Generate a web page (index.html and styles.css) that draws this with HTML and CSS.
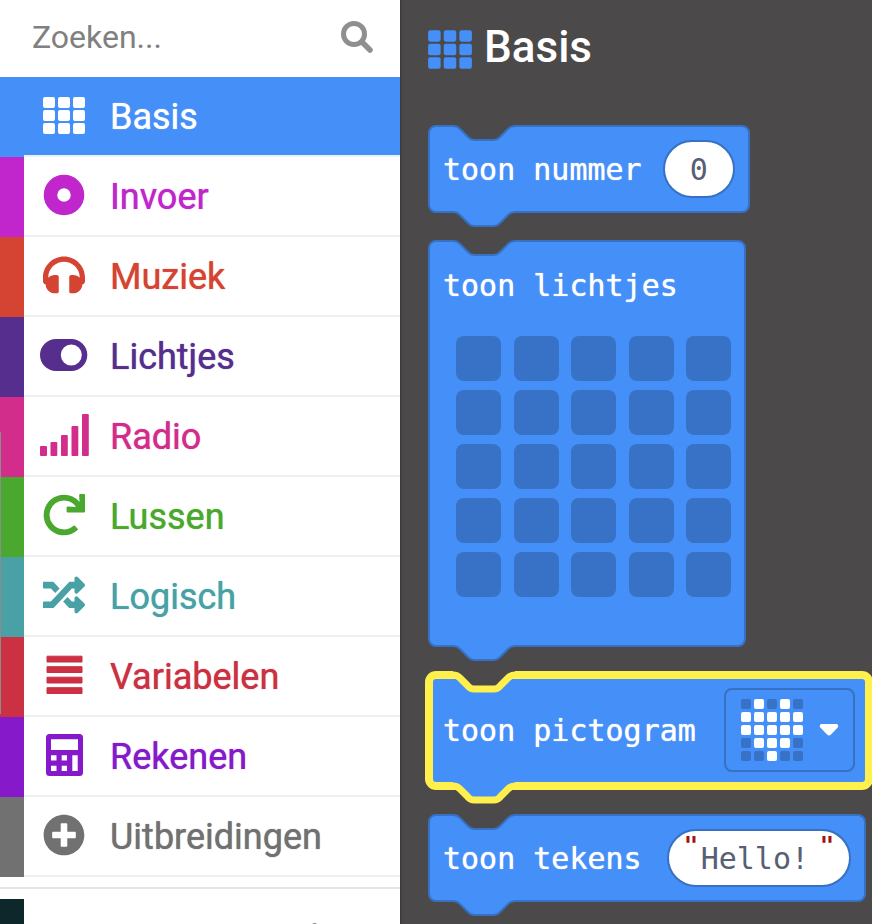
FILE: index.html
```html
<!DOCTYPE html>
<html lang="nl">
<head>
<meta charset="utf-8">
<title>Basis</title>
<link rel="stylesheet" href="styles.css">
</head>
<body>
<svg class="defs" aria-hidden="true">
  <symbol id="grid-icon" viewBox="0 0 48 44">
    <g id="grid-row"><rect x="3" y="3" width="12" height="11" rx="2"/><rect x="18" y="3" width="12" height="11" rx="2"/><rect x="33" y="3" width="12" height="11" rx="2"/></g>
    <use href="#grid-row" y="13"/><use href="#grid-row" y="26"/>
  </symbol>
  <symbol id="notch" viewBox="0 0 70 26">
    <path class="notch-fill" d="M2 0V6C7 6 8 8 10 10L16 16C18 18 19 20 23 20H43C47 20 48 18 50 16L56 10C58 8 59 6 64 6V0Z"/>
    <path class="notch-line" d="M0 6H2C7 6 8 8 10 10L16 16C18 18 19 20 23 20H43C47 20 48 18 50 16L56 10C58 8 59 6 64 6H66"/>
  </symbol>
</svg>
<div class="editor">
  <nav class="toolbox">
    <form class="search">
      <input class="search-input" type="search" placeholder="Zoeken..." aria-label="Zoeken">
      <button class="search-button" type="button" aria-label="Zoeken">
        <svg width="32" height="32" viewBox="0 0 32 32"><circle cx="13" cy="13" r="10.5" fill="none" stroke="currentColor" stroke-width="5"/><path d="M21 21L29 29" stroke="currentColor" stroke-width="5.5" stroke-linecap="round"/></svg>
      </button>
    </form>
    <ul class="categories">
      <li><button class="category basis selected"><span class="tab"></span><span class="row"><svg class="icon"><use href="#grid-icon"/></svg>Basis</span></button></li>
      <li><button class="category invoer"><span class="tab"></span><span class="row"><svg class="icon" viewBox="0 0 48 44"><circle cx="24" cy="21" r="13.5" fill="none" stroke="currentColor" stroke-width="13.5"/></svg>Invoer</span></button></li>
      <li><button class="category muziek"><span class="tab"></span><span class="row"><svg class="icon" viewBox="0 0 48 44"><path transform="translate(3 0) scale(.082)" d="M256 32C114.52 32 0 146.497 0 288v48a32 32 0 0 0 17.689 28.622l14.383 7.191C34.083 431.903 83.421 480 144 480h24c13.255 0 24-10.745 24-24V280c0-13.255-10.745-24-24-24h-24c-31.342 0-59.671 12.879-80 33.627V288c0-105.869 86.131-192 192-192s192 86.131 192 192v1.627C427.671 268.879 399.342 256 368 256h-24c-13.255 0-24 10.745-24 24v176c0 13.255 10.745 24 24 24h24c60.579 0 109.917-48.098 111.928-108.187l14.382-7.191A32 32 0 0 0 512 336v-48c0-141.479-114.496-256-256-256z"/></svg>Muziek</span></button></li>
      <li><button class="category lichtjes"><span class="tab"></span><span class="row"><svg class="icon" viewBox="0 0 48 44"><path fill-rule="evenodd" d="M16 5H31.300a16 16 0 0 1 0 32H16a16 16 0 0 1 0-32ZM31.300 10.500a10.500 10.500 0 1 0 0 21a10.500 10.500 0 0 0 0-21Z"/></svg>Lichtjes</span></button></li>
      <li><button class="category radio"><span class="tab"></span><span class="row"><svg class="icon" viewBox="0 0 48 44"><rect y="32" width="7" height="10" rx="1"/><rect x="10.500" y="28" width="6.800" height="14" rx="1"/><rect x="21" y="21" width="6.800" height="21" rx="1"/><rect x="31.500" y="12" width="6.800" height="30" rx="1"/><rect x="42" y="0" width="6.800" height="42" rx="1"/></svg>Radio</span></button></li>
      <li><button class="category lussen"><span class="tab"></span><span class="row"><svg class="icon" viewBox="0 0 48 44"><path transform="translate(3 0) scale(.082)" d="M500.33 0h-47.41a12 12 0 0 0-12 12.57l4 82.76A247.42 247.42 0 0 0 256 8C119.34 8 7.900 119.530 8 256.190 8.100 393.070 119.100 504 256 504a247.100 247.100 0 0 0 166.180-63.910 12 12 0 0 0 .480-17.430l-34-34a12 12 0 0 0-16.380-.550A176 176 0 1 1 402.100 157.800l-101.530-4.870a12 12 0 0 0-12.570 12v47.410a12 12 0 0 0 12 12h200.330a12 12 0 0 0 12-12V12a12 12 0 0 0-12-12z"/></svg>Lussen</span></button></li>
      <li><button class="category logisch"><span class="tab"></span><span class="row"><svg class="icon" viewBox="0 0 48 44"><path transform="translate(3 0) scale(.082)" d="M504.971 359.029c9.373 9.373 9.373 24.569 0 33.941l-80 79.984c-15.010 15.010-40.971 4.490-40.971-16.971V416h-58.785a12.004 12.004 0 0 1-8.773-3.812l-70.556-75.596 53.333-57.143L352 336h32v-39.981c0-21.438 25.943-31.998 40.971-16.971l80 79.981zM12 176h84l52.781 56.551 53.333-57.143-70.556-75.596A11.999 11.999 0 0 0 122.785 96H12c-6.627 0-12 5.373-12 12v56c0 6.627 5.373 12 12 12zm372 0v39.984c0 21.460 25.961 31.980 40.971 16.971l80-79.984c9.373-9.373 9.373-24.569 0-33.941l-80-79.981C409.943 24.021 384 34.582 384 56.019V96h-58.785a12.004 12.004 0 0 0-8.773 3.812L96 336H12c-6.627 0-12 5.373-12 12v56c0 6.627 5.373 12 12 12h110.785c3.326 0 6.503-1.381 8.773-3.812L352 176h32z"/></svg>Logisch</span></button></li>
      <li><button class="category variabelen"><span class="tab"></span><span class="row"><svg class="icon" viewBox="0 0 48 44"><path d="M7 2.200H42V8H7ZM7 12.700H42V18.500H7ZM7 23.200H42V29H7ZM7 33.700H42V39.500H7Z" stroke="currentColor" stroke-width="1" stroke-linejoin="round"/></svg>Variabelen</span></button></li>
      <li><button class="category rekenen"><span class="tab"></span><span class="row"><svg class="icon" viewBox="0 0 48 44"><path fill-rule="evenodd" d="M9.500 0H39.500a3.500 3.500 0 0 1 3.500 3.500V38.500a3.500 3.500 0 0 1-3.500 3.500H9.500a3.500 3.500 0 0 1-3.500-3.500V3.500a3.500 3.500 0 0 1 3.500-3.500ZM11 5.300V16H38V5.300ZM11 21.200V26.500H16.500V21.200ZM21.700 21.200V26.500H27V21.200ZM32.300 21.200V37H37.700V21.200ZM11 31.700V37H16.500V31.700ZM21.700 31.700V37H27V31.700Z"/></svg>Rekenen</span></button></li>
      <li><button class="category uitbreidingen"><span class="tab"></span><span class="row"><svg class="icon" viewBox="0 0 48 44"><path transform="translate(3 0) scale(.082)" d="M256 8C119 8 8 119 8 256s111 248 248 248 248-111 248-248S393 8 256 8zm144 276c0 6.600-5.400 12-12 12h-92v92c0 6.600-5.400 12-12 12h-56c-6.600 0-12-5.400-12-12v-92h-92c-6.600 0-12-5.400-12-12v-56c0-6.600 5.400-12 12-12h92v-92c0-6.600 5.400-12 12-12h56c6.600 0 12 5.400 12 12v92h92c6.600 0 12 5.400 12 12v56z"/></svg>Uitbreidingen</span></button></li>
    </ul>
    <hr class="divider">
    <button class="category geavanceerd"><span class="tab"></span><span class="row"><svg class="icon" viewBox="0 0 48 44"></svg>Geavanceerd</span></button>
    <div class="scroll-thumb"></div>
  </nav>

  <main class="flyout">
    <h1 class="flyout-title"><svg class="title-icon"><use href="#grid-icon"/></svg>Basis</h1>
    <div class="blocks">
      <div class="block">
        <svg class="notch"><use href="#notch"/></svg>
        <label class="block-label" for="number">toon nummer</label>
        <input class="pill number" id="number" type="text" value="0">
        <svg class="notch bottom"><use href="#notch"/></svg>
      </div>

      <div class="block leds">
        <svg class="notch"><use href="#notch"/></svg>
        <span class="block-label">toon lichtjes</span>
        <div class="led-grid">
          <button aria-label="Led 1"></button><button aria-label="Led 2"></button><button aria-label="Led 3"></button><button aria-label="Led 4"></button><button aria-label="Led 5"></button>
          <button aria-label="Led 6"></button><button aria-label="Led 7"></button><button aria-label="Led 8"></button><button aria-label="Led 9"></button><button aria-label="Led 10"></button>
          <button aria-label="Led 11"></button><button aria-label="Led 12"></button><button aria-label="Led 13"></button><button aria-label="Led 14"></button><button aria-label="Led 15"></button>
          <button aria-label="Led 16"></button><button aria-label="Led 17"></button><button aria-label="Led 18"></button><button aria-label="Led 19"></button><button aria-label="Led 20"></button>
          <button aria-label="Led 21"></button><button aria-label="Led 22"></button><button aria-label="Led 23"></button><button aria-label="Led 24"></button><button aria-label="Led 25"></button>
        </div>
        <svg class="notch bottom"><use href="#notch"/></svg>
      </div>

      <div class="block highlighted">
        <svg class="notch"><use href="#notch"/></svg>
        <span class="block-label">toon pictogram</span>
        <button class="picker" aria-label="Pictogram kiezen">
          <svg width="62" height="62" viewBox="0 0 62 62">
            <g fill="#3872c6"><rect width="10" height="10" rx="2"/><rect x="26" width="10" height="10" rx="2"/><rect x="52" width="10" height="10" rx="2"/><rect y="39" width="10" height="10" rx="2"/><rect x="52" y="39" width="10" height="10" rx="2"/><rect y="52" width="10" height="10" rx="2"/><rect x="13" y="52" width="10" height="10" rx="2"/><rect x="39" y="52" width="10" height="10" rx="2"/><rect x="52" y="52" width="10" height="10" rx="2"/></g>
            <g fill="#fff"><rect x="13" width="10" height="10" rx="2"/><rect x="39" width="10" height="10" rx="2"/><rect y="13" width="10" height="10" rx="2"/><rect x="13" y="13" width="10" height="10" rx="2"/><rect x="26" y="13" width="10" height="10" rx="2"/><rect x="39" y="13" width="10" height="10" rx="2"/><rect x="52" y="13" width="10" height="10" rx="2"/><rect y="26" width="10" height="10" rx="2"/><rect x="13" y="26" width="10" height="10" rx="2"/><rect x="26" y="26" width="10" height="10" rx="2"/><rect x="39" y="26" width="10" height="10" rx="2"/><rect x="52" y="26" width="10" height="10" rx="2"/><rect x="13" y="39" width="10" height="10" rx="2"/><rect x="26" y="39" width="10" height="10" rx="2"/><rect x="39" y="39" width="10" height="10" rx="2"/><rect x="26" y="52" width="10" height="10" rx="2"/></g>
          </svg>
          <svg width="20" height="14" viewBox="0 0 20 14"><path d="M3 1H17C19 1 20 3 18.500 4.700L12 11.500Q10 13.500 8 11.500L1.500 4.700C0 3 1 1 3 1Z" fill="#fff"/></svg>
        </button>
        <svg class="notch bottom"><use href="#notch"/></svg>
      </div>

      <div class="block wide">
        <svg class="notch"><use href="#notch"/></svg>
        <label class="block-label" for="text">toon tekens</label>
        <span class="pill text"><span class="quote">"</span><input id="text" type="text" value="Hello!"><span class="quote">"</span></span>
        <svg class="notch bottom"><use href="#notch"/></svg>
      </div>
    </div>
  </main>
</div>
</body>
</html>
```
FILE: styles.css
```css
* { box-sizing: border-box; }

body {
  margin: 0;
  overflow: hidden;
  font-family: Roboto, "Liberation Sans", sans-serif;
  background: #4b4949;
}

button, input {
  margin: 0;
  padding: 0;
  border: 0;
  background: none;
  font: inherit;
  color: inherit;
}

.defs { position: absolute; width: 0; height: 0; }

.editor { display: flex; height: 100vh; }

/* Toolbox */
.toolbox {
  position: relative;
  flex: 0 0 400px;
  overflow: hidden;
  background: #fff;
}

.search {
  display: flex;
  align-items: center;
  height: 77px;
  padding: 0 27px 4px 32px;
  color: #8f8f8f;
}

.search-input {
  flex: 1;
  min-width: 0;
  outline: 0;
  font-size: 32px;
  line-height: 40px;
  appearance: none;
}

.search-input::placeholder { color: #808080; opacity: 1; }

.search-button { display: flex; }

.categories { margin: 0; padding: 0; list-style: none; }

.category {
  display: flex;
  width: 100%;
  height: 80px;
  font-size: 36px;
  text-align: left;
  text-shadow: 0 0 1px currentColor;
  color: var(--hue);
}

.tab { flex: 0 0 24px; height: 80px; background: var(--hue); }

.row {
  display: flex;
  flex: 1;
  align-items: center;
  gap: 22px;
  height: 80px;
  padding: 2px 0 0 16px;
  border-bottom: 2px solid #ebf0f0;
}

.icon {
  flex: none;
  width: 48px;
  height: 44px;
  margin-bottom: 2px;
  overflow: visible;
  fill: currentColor;
}

.selected .row { background: var(--hue); background-clip: padding-box; color: #fff; }

.basis { --hue: #458ff8; }
.invoer { --hue: #c026cc; }
.muziek { --hue: #d54332; }
.lichtjes { --hue: #562e8d; }
.radio { --hue: #d22d8a; }
.lussen { --hue: #4ba82f; }
.logisch { --hue: #49a1a6; }
.variabelen { --hue: #cb3142; }
.rekenen { --hue: #861acb; }
.uitbreidingen { --hue: #717171; }
.geavanceerd { --hue: #0d272b; text-shadow: none; }
.geavanceerd .row { color: #717171; }

.divider {
  height: 2px;
  margin: 10px 0;
  border: 0;
  background: #e5e5e5;
}

.scroll-thumb {
  position: absolute;
  top: 432px;
  left: 0;
  width: 1px;
  height: 282px;
  background: #8c8c8c;
}

/* Flyout */
.flyout {
  flex: 1;
  min-width: 0;
  padding: 16px 0 0 28px;
  box-shadow: inset 3px 0 3px -3px #222;
}

.flyout-title {
  display: flex;
  align-items: center;
  gap: 9px;
  margin: 0 0 47px -3px;
  font-size: 44px;
  font-weight: 500;
  line-height: 62px;
  color: #fff;
}

.title-icon {
  width: 50px;
  height: 46px;
  margin-top: 6px;
  fill: #458ff8;
}

.blocks {
  display: flex;
  flex-direction: column;
  align-items: flex-start;
  gap: 27px;
}

.block {
  --line: #3671c3;
  --line-width: 2px;
  position: relative;
  display: flex;
  align-items: center;
  gap: 21px;
  padding: 13px;
  border: 2px solid var(--line);
  border-radius: 8px;
  background: #458ff8;
  font-family: "DejaVu Sans Mono", monospace;
  font-size: 30px;
  line-height: 36px;
  text-shadow: 0 0 1px currentColor;
  color: #fff;
  white-space: nowrap;
}

.block-label { padding-top: 2px; }

.wide { gap: 25px; }

.notch {
  position: absolute;
  top: -7px;
  left: 21px;
  width: 70px;
  height: 26px;
}

.notch-fill { fill: var(--notch, #4b4949); }
.notch-line { fill: none; stroke: var(--line); stroke-width: var(--line-width); }

.notch.bottom { --notch: #458ff8; top: auto; bottom: -21px; }

.leds {
  flex-direction: column;
  align-items: flex-start;
  gap: 32px;
  padding: 24px 13px 48px;
}

.led-grid {
  display: grid;
  grid-template-columns: repeat(5, 45px);
  justify-content: space-between;
  row-gap: 9px;
  width: 275px;
  margin-left: 13px;
}

.led-grid button { height: 45px; border-radius: 8px; background: #3872c6; }

.highlighted {
  --line: #fff04d;
  --line-width: 7px;
  gap: 28px;
  padding: 9px 10px 10px;
  border-width: 5px;
  box-shadow: 0 0 0 3px #fff04d;
}

.highlighted .notch { top: -10px; left: 18px; }
.highlighted .notch.bottom { top: auto; bottom: -24px; }

.pill {
  height: 58px;
  border: 2px solid #3671c3;
  border-radius: 29px;
  background: #fff;
  color: #575e75;
}

.number { width: 72px; padding-top: 1px; text-align: center; }

.text { display: flex; width: 184px; padding-left: 15px; }

.text input { width: 109px; margin: 0 10px 0 3px; padding-top: 2px; }

.quote { width: 14px; font-size: 24px; font-weight: bold; line-height: 30px; text-shadow: none; color: #a31515; }

.picker {
  display: flex;
  align-items: center;
  gap: 16px;
  width: 131px;
  height: 84px;
  padding-left: 15px;
  border: 2px solid #3671c3;
  border-radius: 8px;
}
```
